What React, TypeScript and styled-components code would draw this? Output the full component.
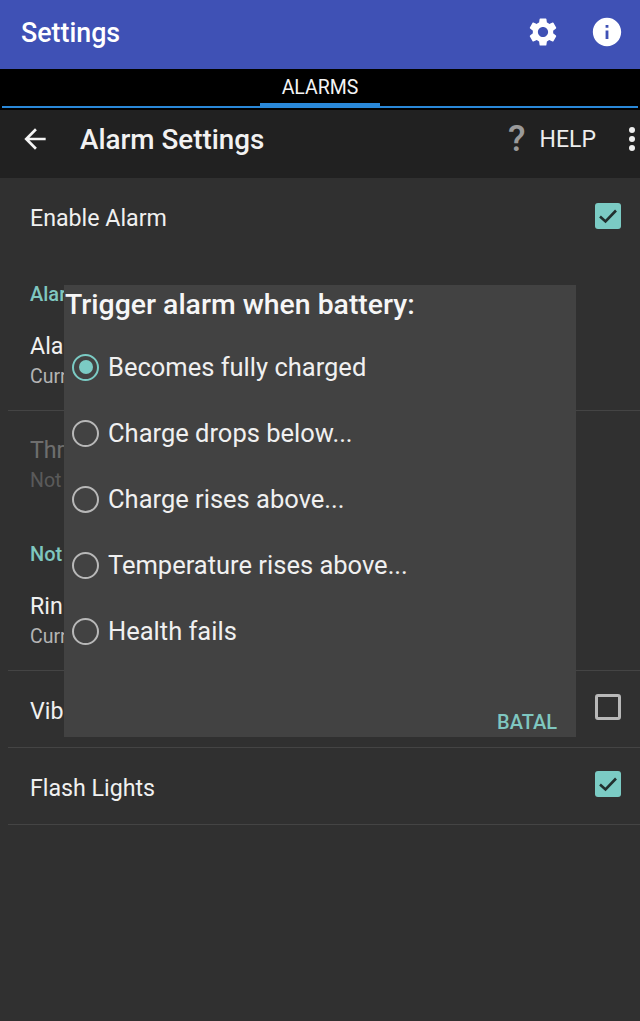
import React from 'react';
import styled, { createGlobalStyle } from 'styled-components';
import { MdSettings, MdInfo, MdArrowBack } from 'react-icons/md';

const GlobalStyle = createGlobalStyle`
  html, body {
    margin: 0;
    padding: 0;
    background: #303030;
  }
  body {
    font-family: Roboto, "Liberation Sans", sans-serif;
  }
`;

const Page = styled.div`
  position: relative;
  width: 640px;
  height: 1021px;
  overflow: hidden;
  background: #303030;
  color: #f2f2f2;
`;

const AppBar = styled.header`
  display: flex;
  align-items: center;
  height: 69px;
  padding: 0 16px 4px 21px;
  box-sizing: border-box;
  background: #3f51b5;
  color: #fff;
`;

const AppTitle = styled.h1`
  flex: 1;
  margin: 0;
  font-size: 26.8px;
  font-weight: 500;
`;

const AppIcons = styled.div`
  display: flex;
  align-items: center;
  gap: 30px;
  margin-bottom: 2px;
  font-size: 34px;
  svg {
    display: block;
  }
`;

const TabBar = styled.nav`
  display: flex;
  justify-content: center;
  height: 41px;
  box-sizing: border-box;
  background: #000;
  position: relative;
`;

const TabLine = styled.div`
  position: absolute;
  left: 2px;
  right: 2px;
  top: 37px;
  height: 1.5px;
  background: #2a88d8;
`;

const Tab = styled.div`
  width: 120px;
  height: 37px;
  box-sizing: border-box;
  border-bottom: 3px solid #2a88d8;
  padding-top: 7px;
  text-align: center;
  font-size: 19.5px;
  color: #f4f4f4;
`;

const Toolbar = styled.div`
  display: flex;
  align-items: center;
  height: 68px;
  padding: 0 0 10px 19px;
  box-sizing: border-box;
  background: #212121;
`;

const BackIcon = styled(MdArrowBack)`
  font-size: 32px;
  margin-right: 29px;
  color: #f4f4f4;
`;

const ToolbarTitle = styled.h2`
  flex: 1;
  margin: 0;
  font-size: 27.8px;
  font-weight: 500;
  color: #f2f2f2;
`;

const HelpMark = styled.span`
  font-size: 36px;
  font-weight: 500;
  color: #9a9a9a;
  margin-right: 14px;
`;

const HelpLabel = styled.span`
  font-size: 23px;
  color: #eee;
  margin-right: 33px;
`;

const Dots = styled.div`
  display: flex;
  flex-direction: column;
  gap: 3px;
  margin-right: 5px;
`;

const Dot = styled.span`
  width: 6px;
  height: 6px;
  border-radius: 50%;
  background: #eee;
`;

const Row = styled.div<{ $height: number; $top?: number; $line?: boolean }>`
  display: flex;
  align-items: ${(p) => (p.$top !== undefined ? 'flex-start' : 'center')};
  height: ${(p) => p.$height}px;
  box-sizing: border-box;
  margin-left: 8px;
  padding: ${(p) => p.$top ?? 3}px 19px 0 22px;
  border-bottom: ${(p) => (p.$line ? '1.5px solid #444' : 'none')};
`;

const RowText = styled.div<{ $dim?: boolean }>`
  flex: 1;
  opacity: ${(p) => (p.$dim ? 0.32 : 1)};
`;

const RowTitle = styled.div`
  font-size: 23.2px;
  line-height: 28px;
  color: #f0f0f0;
`;

const RowSub = styled.div`
  font-size: 19.5px;
  line-height: 24px;
  margin-top: 5px;
  color: #b4b4b4;
`;

const SectionLabel = styled.div`
  height: 70px;
  padding: 24px 0 0 30px;
  box-sizing: border-box;
  font-size: 20px;
  font-weight: 500;
  color: #7fc7c0;
`;

const Checkbox = styled.span<{ $on?: boolean; $lift?: number }>`
  display: flex;
  align-items: center;
  justify-content: center;
  width: 26px;
  height: 26px;
  box-sizing: border-box;
  border-radius: 3px;
  margin-top: -${(p) => p.$lift ?? 7}px;
  background: ${(p) => (p.$on ? '#7bcbc4' : 'transparent')};
  border: ${(p) => (p.$on ? 'none' : '3px solid #b8b8b8')};
`;

const Dialog = styled.div`
  position: absolute;
  left: 64px;
  top: 285px;
  width: 512px;
  height: 452px;
  display: flex;
  flex-direction: column;
  box-sizing: border-box;
  background: #424242;
`;

const DialogTitle = styled.h3`
  margin: 0;
  padding: 4px 0 0 1px;
  height: 49px;
  box-sizing: border-box;
  font-size: 28.4px;
  line-height: 32px;
  font-weight: 500;
  color: #f6f6f6;
`;

const Options = styled.div`
  flex: 1;
  display: flex;
  flex-direction: column;
`;

const Option = styled.div`
  display: flex;
  align-items: center;
  gap: 9px;
  height: 66px;
  padding-left: 8px;
  font-size: 25.5px;
  color: #f0f0f0;
`;

const Radio = styled.span<{ $on?: boolean }>`
  display: flex;
  align-items: center;
  justify-content: center;
  width: 27px;
  height: 27px;
  box-sizing: border-box;
  border-radius: 50%;
  border: 2.5px solid ${(p) => (p.$on ? '#7bcbc4' : '#b8b8b8')};
  &::after {
    content: '';
    display: ${(p) => (p.$on ? 'block' : 'none')};
    width: 14px;
    height: 14px;
    border-radius: 50%;
    background: #7bcbc4;
  }
`;

const DialogActions = styled.div`
  display: flex;
  justify-content: flex-end;
  padding: 0 19px 2px 0;
  font-size: 20px;
  line-height: 26px;
  font-weight: 500;
  color: #7fc7c0;
`;

const Check = () => (
  <svg width="20" height="16" viewBox="0 0 20 16" fill="none">
    <path d="M2 8.5 L7.5 13.5 L18 2.5" stroke="#22302f" strokeWidth="2.6" />
  </svg>
);

const options = [
  'Becomes fully charged',
  'Charge drops below...',
  'Charge rises above...',
  'Temperature rises above...',
  'Health fails',
];

export default function App() {
  return (
    <Page>
      <GlobalStyle />
      <AppBar>
        <AppTitle>Settings</AppTitle>
        <AppIcons>
          <MdSettings />
          <MdInfo />
        </AppIcons>
      </AppBar>
      <TabBar>
        <TabLine />
        <Tab>ALARMS</Tab>
      </TabBar>
      <Toolbar>
        <BackIcon />
        <ToolbarTitle>Alarm Settings</ToolbarTitle>
        <HelpMark>?</HelpMark>
        <HelpLabel>HELP</HelpLabel>
        <Dots>
          <Dot />
          <Dot />
          <Dot />
        </Dots>
      </Toolbar>

      <Row $height={80} $top={26}>
        <RowText>
          <RowTitle>Enable Alarm</RowTitle>
        </RowText>
        <Checkbox $on $lift={1}>
          <Check />
        </Checkbox>
      </Row>

      {/* only the part of these rows that shows beside the dialog */}
      <SectionLabel>Alar</SectionLabel>
      <Row $height={83} $top={4} $line>
        <RowText>
          <RowTitle>Ala</RowTitle>
          <RowSub>Curr</RowSub>
        </RowText>
      </Row>
      <Row $height={107} $top={25}>
        <RowText $dim>
          <RowTitle>Thr</RowTitle>
          <RowSub>Not</RowSub>
        </RowText>
      </Row>

      <SectionLabel>Not</SectionLabel>
      <Row $height={83} $top={4} $line>
        <RowText>
          <RowTitle>Rin</RowTitle>
          <RowSub>Curr</RowSub>
        </RowText>
      </Row>
      <Row $height={77} $line>
        <RowText>
          <RowTitle>Vib</RowTitle>
        </RowText>
        <Checkbox />
      </Row>
      <Row $height={77} $line>
        <RowText>
          <RowTitle>Flash Lights</RowTitle>
        </RowText>
        <Checkbox $on>
          <Check />
        </Checkbox>
      </Row>

      <Dialog>
        <DialogTitle>Trigger alarm when battery:</DialogTitle>
        <Options>
          {options.map((label, i) => (
            <Option key={label}>
              <Radio $on={i === 0} />
              {label}
            </Option>
          ))}
        </Options>
        <DialogActions>BATAL</DialogActions>
      </Dialog>
    </Page>
  );
}
